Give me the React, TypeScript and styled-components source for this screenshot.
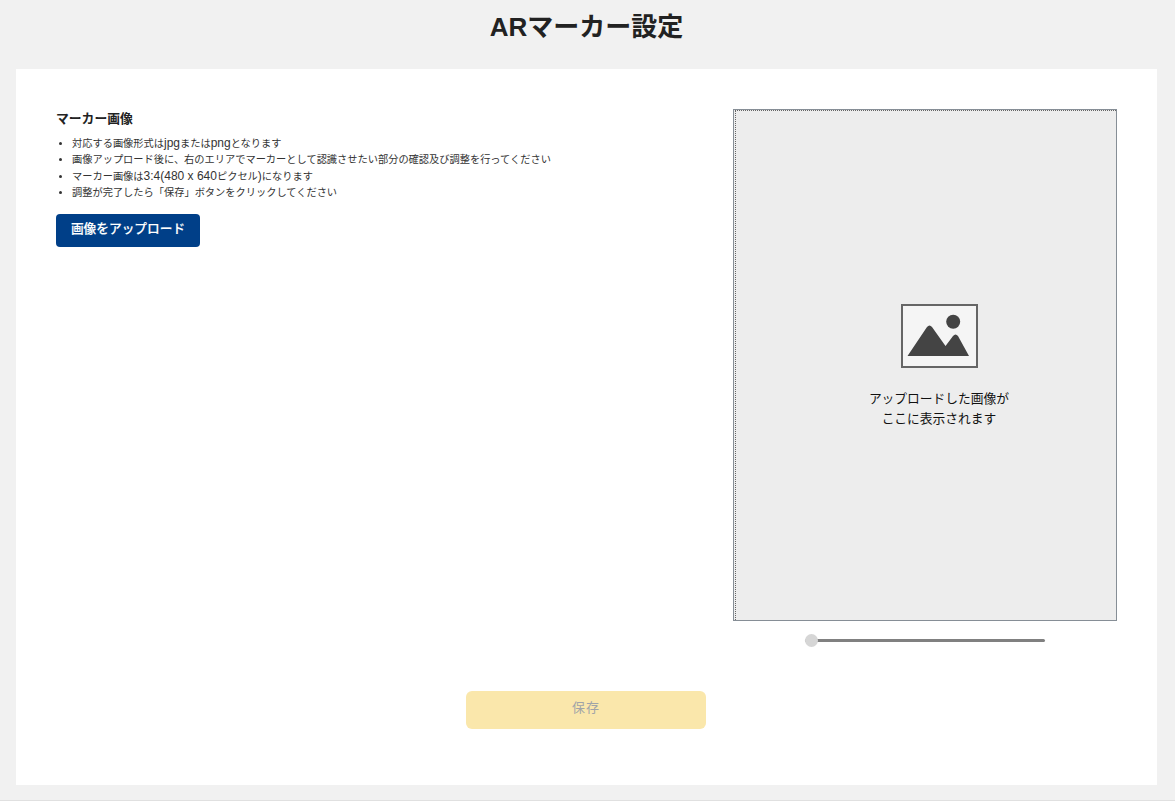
import styled, { createGlobalStyle } from 'styled-components';

const GlobalStyle = createGlobalStyle`
  html, body {
    margin: 0;
    padding: 0;
    background: #f1f1f1;
  }
  body {
    font-family: "Liberation Sans", "Noto Sans CJK JP", sans-serif;
    color: #222;
  }
`;

const Page = styled.div`
  height: 801px;
  box-sizing: border-box;
  border-bottom: 1px solid #e0e0e0;
  padding: 0 18px 0 16px;
  overflow: hidden;
`;

const Title = styled.h1`
  margin: 0;
  height: 69px;
  padding-top: 9px;
  box-sizing: border-box;
  font-size: 26px;
  line-height: 36px;
  font-weight: 700;
  text-align: center;
  color: #222;
`;

const Card = styled.main`
  background: #fff;
  height: 716px;
  box-sizing: border-box;
  padding: 40px 40px 56px;
  display: flex;
  flex-direction: column;
  justify-content: space-between;
`;

const Columns = styled.div`
  display: flex;
  justify-content: space-between;
  align-items: flex-start;
`;

const Guide = styled.section`
  width: 560px;
`;

const SectionTitle = styled.h2`
  margin: 0 0 8px;
  font-size: 12.8px;
  line-height: 19px;
  font-weight: 700;
  color: #222;
`;

const Notes = styled.ul`
  margin: 0 0 13px;
  padding: 0 0 0 16px;
`;

const Note = styled.li`
  font-size: 10.23px;
  line-height: 16.3px;
  color: #333;
`;

const Latin = styled.span`
  font-size: 12px;
  line-height: 0;
`;

const UploadButton = styled.button`
  display: block;
  width: 144px;
  height: 33px;
  border: 0;
  border-radius: 4px;
  padding: 0 0 3px;
  background: #003f88;
  color: #fff;
  font-family: inherit;
  font-size: 12.7px;
  line-height: 16px;
  font-weight: 500;
  -webkit-text-stroke: 0.15px #fff;
`;

const Editor = styled.section`
  width: 384px;
  display: flex;
  flex-direction: column;
  align-items: center;
`;

const Preview = styled.div`
  position: relative;
  width: 100%;
  height: 512px;
  box-sizing: border-box;
  border: 1px solid #868e96;
  background: #ededed;
  display: flex;
  flex-direction: column;
  align-items: center;
  padding-top: 194px;
  padding-left: 28px;
`;

const CropEdge = styled.div`
  position: absolute;
  top: 0;
  left: 1px;
  right: 0;
  bottom: 0;
  border-top: 1px dotted #666;
  border-left: 1px dotted #666;
  pointer-events: none;
`;

const PlaceholderText = styled.p`
  margin: 21px 0 0;
  font-size: 12.75px;
  line-height: 20px;
  text-align: center;
  color: #111;
`;

const ZoomTrack = styled.div`
  position: relative;
  margin-top: 18px;
  width: 240px;
  height: 3px;
  border-radius: 2px;
  background: #808080;
`;

const ZoomThumb = styled.span`
  position: absolute;
  left: 0;
  top: -5px;
  width: 13px;
  height: 13px;
  border-radius: 50%;
  background: #d6d6d6;
`;

const SaveRow = styled.div`
  display: flex;
  justify-content: center;
  padding-right: 1px;
`;

const SaveButton = styled.button`
  width: 240px;
  height: 38px;
  border: 0;
  border-radius: 6px;
  padding: 0 0 4px;
  background: #fae7ab;
  color: #a0a4a8;
  font-family: inherit;
  font-size: 13px;
  line-height: 16px;
  letter-spacing: 1px;
`;

const ImageIcon = () => (
  <svg width="77" height="64" viewBox="0 0 77 64" aria-hidden="true">
    <rect x="1" y="1" width="75" height="62" fill="#f5f5f5" stroke="#666" strokeWidth="2" />
    <circle cx="52.2" cy="17.7" r="7" fill="#444" />
    <path
      d="M6.5 52 L26 23 Q28.5 20 31 23 L44.5 42 L52 32 Q54.5 29 57 32 L68 52 Z"
      fill="#444"
    />
  </svg>
);

export default function App() {
  return (
    <>
      <GlobalStyle />
      <Page>
        <Title>ARマーカー設定</Title>
        <Card>
          <Columns>
            <Guide>
              <SectionTitle>マーカー画像</SectionTitle>
              <Notes>
                <Note>
                  対応する画像形式は<Latin>jpg</Latin>または<Latin>png</Latin>となります
                </Note>
                <Note>画像アップロード後に、右のエリアでマーカーとして認識させたい部分の確認及び調整を行ってください</Note>
                <Note>
                  マーカー画像は<Latin>3:4(480 x 640</Latin>ピクセル<Latin>)</Latin>になります
                </Note>
                <Note>調整が完了したら「保存」ボタンをクリックしてください</Note>
              </Notes>
              <UploadButton>画像をアップロード</UploadButton>
            </Guide>
            <Editor>
              <Preview>
                <CropEdge />
                <ImageIcon />
                <PlaceholderText>
                  アップロードした画像が
                  <br />
                  ここに表示されます
                </PlaceholderText>
              </Preview>
              <ZoomTrack>
                <ZoomThumb />
              </ZoomTrack>
            </Editor>
          </Columns>
          <SaveRow>
            <SaveButton disabled>保存</SaveButton>
          </SaveRow>
        </Card>
      </Page>
    </>
  );
}
